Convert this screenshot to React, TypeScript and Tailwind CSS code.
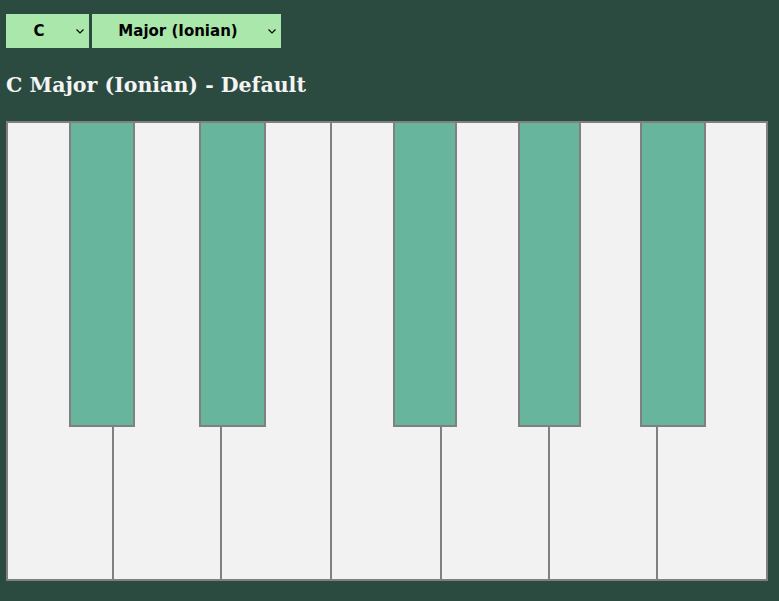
import React from "react";

const whiteKeys = [
  "w-[106px] border-r-2",
  "w-[108px] border-r-2",
  "w-[110px] border-r-2",
  "w-[110px] border-r-2",
  "w-[108px] border-r-2",
  "w-[108px] border-r-2",
  "w-[108px]",
];
const blackKeys = [
  "left-[61px] w-[66px]",
  "left-[191px] w-[67px]",
  "left-[385px] w-[64px]",
  "left-[510px] w-[63px]",
  "left-[632px] w-[66px]",
];

function Chevron() {
  return (
    <svg width="8" height="5" viewBox="0 0 8 5" className="shrink-0 mr-[5px]">
      <path d="M0.5 0.5 L4 4 L7.5 0.5" fill="none" stroke="#000" strokeWidth="1.2" />
    </svg>
  );
}

function Select({ label, className }: { label: string; className: string }) {
  return (
    <div
      className={
        "flex items-center h-[34px] bg-[#a9e7ab] text-black font-bold text-[15px] " + className
      }
    >
      <span className="flex-1 text-center mr-[4px]">{label}</span>
      <Chevron />
    </div>
  );
}

export default function App() {
  return (
    <div className="w-[779px] h-[601px] bg-[#2b4b41] overflow-hidden font-['DejaVu_Sans',sans-serif]">
      <div className="flex gap-[3px] pt-[14px] pl-[6px]">
        <Select label="C" className="w-[83px]" />
        <Select label="Major (Ionian)" className="w-[189px]" />
      </div>
      <h1 className="mt-[22px] ml-[6px] text-[20.5px] font-bold text-[#f4f4f4] leading-[30px] font-['DejaVu_Serif',serif]">
        C Major (Ionian) - Default
      </h1>
      <div className="mt-[21px] ml-[6px] w-[762px] h-[460px] border-2 border-[#808080] relative flex bg-[#f2f2f2]">
        {whiteKeys.map((c, i) => (
          <div key={i} className={"h-full bg-[#f2f2f2] border-[#808080] " + c} />
        ))}
        {blackKeys.map((c, i) => (
          <div
            key={i}
            className={
              "absolute top-0 h-[304px] bg-[#66b59c] border-x-2 border-b-2 border-[#808080] " + c
            }
          />
        ))}
      </div>
    </div>
  );
}
